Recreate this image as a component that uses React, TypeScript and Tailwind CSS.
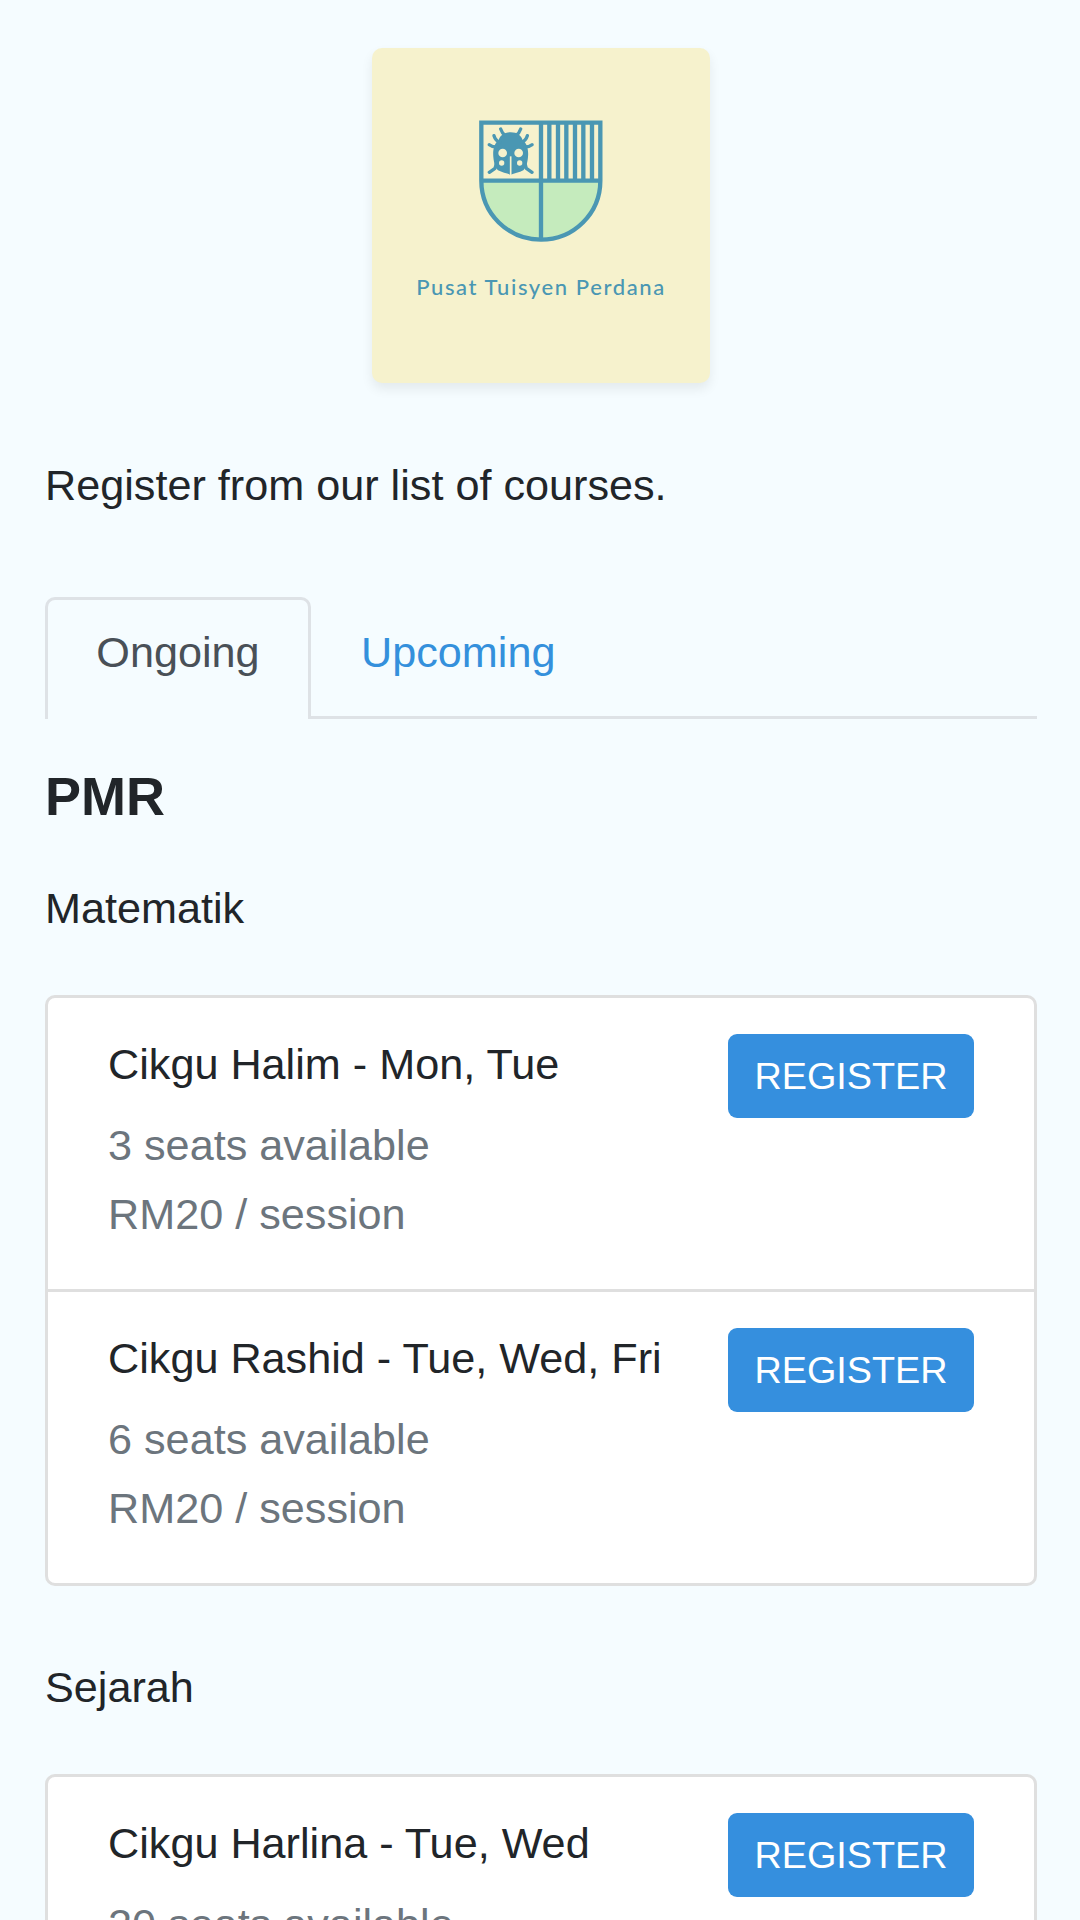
function Logo() {
  return (
    <div className="w-[338px] h-[335px] rounded-[10px] bg-[#f6f2cd] shadow-[0_6px_12px_rgba(0,0,0,0.075)] flex flex-col items-center pt-[61px]">
      <svg className="mr-[2px]" width="160" height="140" viewBox="0 0 480 420" fill="none">
        <path d="M64 215H421C421 313 341 392 243 392C144 392 64 313 64 215Z" fill="#c5ebbd" />
        <g stroke="#4a97b3" strokeWidth="13">
          <path d="M64 41H421V215C421 313 341 392 243 392C144 392 64 313 64 215Z" />
          <path d="M64 215H421M243 41V392M268 41V215M294 41V215M319 41V215M345 41V215M370 41V215M396 41V215" />
        </g>
        <path
          fill="#4a97b3"
          d="M152 70C172 70 184 80 188 94C202 104 206 124 204 144C202 164 198 176 190 184C178 190 162 194 152 197C142 194 126 190 114 184C106 176 102 164 100 144C98 124 102 104 116 94C120 80 132 70 152 70Z"
        />
        <g fill="#f6f2cd">
          <circle cx="128" cy="132" r="13" />
          <circle cx="176" cy="132" r="13" />
          <circle cx="125" cy="162" r="8" />
          <circle cx="179" cy="162" r="8" />
        </g>
        <path d="M152 142V198" stroke="#f6f2cd" strokeWidth="5" />
        <g stroke="#4a97b3" strokeWidth="10" strokeLinecap="round" strokeLinejoin="round">
          <path d="M122 60C125 68 128 74 134 78M182 60C179 68 176 74 170 78" />
          <path d="M102 80C105 90 110 96 120 100M202 80C199 90 194 96 184 100" />
          <path d="M88 107C94 112 100 114 110 114M216 107C210 112 204 114 194 114" />
          <path d="M88 190L105 178L110 160M216 190L199 178L194 160" />
        </g>
      </svg>
      <p className="mt-[24px] font-['Lato',sans-serif] font-medium text-[22px] leading-[28px] tracking-[1.6px] text-[#4a97b3] whitespace-nowrap">
        Pusat Tuisyen Perdana
      </p>
    </div>
  );
}

function Row({ title, seats, border }: { title: string; seats: string; border?: boolean }) {
  return (
    <li className={`flex justify-between pt-[36px] pb-[40px] pl-[60px] pr-[60px] ${border ? "border-b-[3px] border-[#dfdfdf]" : ""}`}>
      <div>
        <p className="text-[#212529] leading-[60px]">{title}</p>
        <p className="text-[#6c757d] leading-[69px] mt-[17px]">{seats}</p>
        <p className="text-[#6c757d] leading-[69px]">RM20 / session</p>
      </div>
      <button className="w-[246px] h-[84px] rounded-[9px] bg-[#358fde] text-white text-[37.8px] leading-[83px] shrink-0">
        REGISTER
      </button>
    </li>
  );
}

export default function App() {
  return (
    <div className="h-[1920px] overflow-hidden bg-[#f5fcff] pl-[45px] pr-[43px] pt-[48px] font-['Liberation_Sans',sans-serif] text-[43.2px] text-[#212529]">
      <div className="flex justify-center">
        <Logo />
      </div>
      <p className="mt-[72px] leading-[60px]">Register from our list of courses.</p>
      <ul className="mt-[82px] flex border-b-[3px] border-[#dee2e6] h-[122px]">
        <li className="w-[266px] h-[122px] rounded-t-[10px] border-[3px] border-b-0 border-[#dee2e6] bg-[#f5fcff] flex justify-center pt-[22px] leading-[60px] text-[#495057]">
          Ongoing
        </li>
        <li className="pl-[50px] pt-[25px] leading-[60px] text-[#3490dc]">Upcoming</li>
      </ul>
      <h4 className="mt-[40px] text-[54px] font-bold leading-[74px]">PMR</h4>
      <p className="mt-[45px] leading-[60px]">Matematik</p>
      <ul className="mt-[57px] rounded-[10px] border-[3px] border-[#dfdfdf] bg-white">
        <Row title="Cikgu Halim - Mon, Tue" seats="3 seats available" border />
        <Row title="Cikgu Rashid - Tue, Wed, Fri" seats="6 seats available" />
      </ul>
      <p className="mt-[71px] leading-[60px]">Sejarah</p>
      <ul className="mt-[57px] rounded-[10px] border-[3px] border-[#dfdfdf] bg-white">
        <Row title="Cikgu Harlina - Tue, Wed" seats="20 seats available" />
      </ul>
    </div>
  );
}
